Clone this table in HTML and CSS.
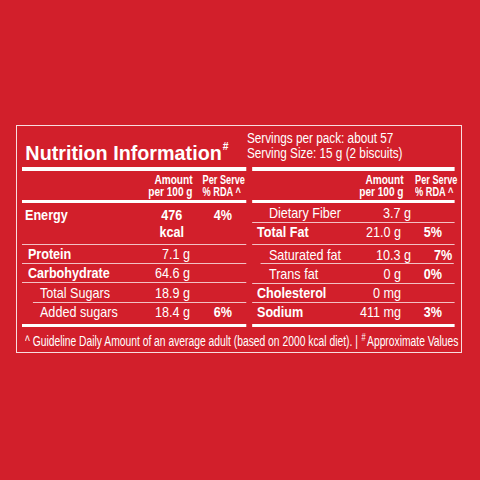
FILE: index.html
```html
<!DOCTYPE html>
<html>
<head>
<meta charset="utf-8">
<link rel="stylesheet" href="styles.css">
</head>
<body>
<div class="panel">
  <div class="inner">
    <div class="col left">
      <div class="head">
        <h1 class="title">Nutrition Information<sup class="hash">#</sup></h1>
      </div>
      <div class="rule"></div>
      <div class="colhead">
        <div></div>
        <div class="amt-h">Amount<br>per 100 g</div>
        <div class="rda-h"><span>Per Serve<br>% RDA ^</span></div>
      </div>
      <div class="rule r3"></div>
      <div class="row h42 line energy"><span class="lbl b e">Energy</span><span class="amt b"><span class="kcal">476<br>kcal</span></span><span class="rda">4%</span></div>
      <div class="row h19 line"><span class="lbl b">Protein</span><span class="amt">7.1 g</span><span class="rda"></span></div>
      <div class="row h19 line"><span class="lbl b">Carbohydrate</span><span class="amt">64.6 g</span><span class="rda"></span></div>
      <div class="row h20 line sub-line-l"><span class="lbl ind">Total Sugars</span><span class="amt">18.9 g</span><span class="rda"></span></div>
      <div class="row h21 top1"><span class="lbl ind">Added sugars</span><span class="amt">18.4 g</span><span class="rda">6%</span></div>
      <div class="rule r3"></div>
    </div>
    <div class="col right">
      <div class="head servings">
        <p>Servings per pack: about 57</p>
        <p>Serving Size: 15 g (2 biscuits)</p>
      </div>
      <div class="rule"></div>
      <div class="colhead">
        <div></div>
        <div class="amt-h">Amount<br>per 100 g</div>
        <div class="rda-h"><span>Per Serve<br>% RDA ^</span></div>
      </div>
      <div class="rule r3"></div>
      <div class="row h20 line"><span class="lbl ind">Dietary Fiber</span><span class="amt">3.7 g</span><span class="rda"></span></div>
      <div class="row h22 line top1"><span class="lbl b">Total Fat</span><span class="amt">21.0 g</span><span class="rda">5%</span></div>
      <div class="row h19 line sub-line-r"><span class="lbl ind">Saturated fat</span><span class="amt">10.3 g</span><span class="rda">7%</span></div>
      <div class="row h20 line"><span class="lbl ind">Trans fat</span><span class="amt">0 g</span><span class="rda">0%</span></div>
      <div class="row h19 line"><span class="lbl b">Cholesterol</span><span class="amt">0 mg</span><span class="rda"></span></div>
      <div class="row h21 top1"><span class="lbl b">Sodium</span><span class="amt">411 mg</span><span class="rda">3%</span></div>
      <div class="rule r3"></div>
    </div>
  </div>
  <div class="footer"><span class="ftext">^ Guideline Daily Amount of an average adult (based on 2000 kcal diet). | <sup class="fhash">#</sup>Approximate Values</span></div>
</div>
</body>
</html>
```
FILE: styles.css
```css
html, body {
  margin: 0;
  padding: 0;
  background: #d21f2b;
}
body {
  width: 480px;
  height: 480px;
  overflow: hidden;
  font-family: "Liberation Sans", Arial, sans-serif;
  color: #fff;
}
.panel {
  margin: 125px 0 0 16px;
  width: 433px;
  height: 226px;
  border: 1px solid rgba(255, 255, 255, 0.85);
  padding: 0 6px 0 5px;
  overflow: hidden;
}
/* condensed type: the whole table is laid out wide and squeezed horizontally */
.inner {
  width: 515.48px;
  display: flex;
  column-gap: 7.14px;
  transform: scaleX(0.84);
  transform-origin: 0 0;
}
.left { width: 266.67px; flex: none; }
.right { width: 241.67px; flex: none; }
.head {
  height: 41px;
  box-sizing: border-box;
  display: flex;
  flex-direction: column;
  justify-content: flex-end;
}
.title {
  margin: 0 0 2px 3.6px;
  font-size: 21px;
  font-weight: bold;
  line-height: 24px;
  white-space: nowrap;
  transform: scaleX(1.12);
  transform-origin: 0 0;
}
.hash {
  font-size: 11px;
  line-height: 11px;
  vertical-align: top;
  margin-left: 1px;
}
.servings {
  justify-content: flex-start;
  padding-top: 5px;
  margin-left: -6px;
}
.servings p {
  margin: 0;
  font-size: 14px;
  line-height: 15px;
  white-space: nowrap;
}
.rule {
  height: 4px;
  background: #fff;
}
.r3 { height: 3px; }
.colhead, .row {
  display: grid;
  grid-template-columns: 1fr 71.4px 54.8px;
  column-gap: 11.9px;
  align-items: center;
  white-space: nowrap;
}
.right .colhead, .right .row {
  grid-template-columns: 1fr 71.4px 52.4px;
}
.colhead { height: 29px; }
.amt-h {
  text-align: right;
  font-weight: bold;
  font-size: 12px;
  line-height: 12px;
  margin-right: -3px;
}
.rda-h {
  font-weight: bold;
  font-size: 12px;
  line-height: 12px;
  padding-left: 3.6px;
}
.right .rda-h { padding-left: 4.8px; }
.rda-h span {
  display: inline-block;
  transform: scaleX(0.91);
  transform-origin: 0 0;
}
.row {
  font-size: 15px;
  line-height: 16px;
  box-sizing: border-box;
}
.line { border-bottom: 1px solid rgba(255, 255, 255, 0.72); }
.sub-line-l, .sub-line-r {
  border-bottom: none;
  background-image: linear-gradient(rgba(255, 255, 255, 0.72), rgba(255, 255, 255, 0.72));
  background-repeat: no-repeat;
}
.sub-line-l { background-position: 13px 100%; background-size: calc(100% - 13px) 1px; }
.sub-line-r { background-position: 10.7px 100%; background-size: calc(100% - 10.7px) 1px; }
.h42 { height: 42px; }
.h22 { height: 22px; }
.h21 { height: 21px; }
.h20 { height: 20px; }
.h19 { height: 19px; }
.top1 { align-items: start; padding-top: 1px; }
.energy { align-items: start; padding-top: 3px; line-height: 17px; }
.lbl { padding-left: 7px; }
.lbl.e { padding-left: 3.6px; }
.right .lbl { padding-left: 6px; }
.lbl.ind { padding-left: 21.4px; }
.right .lbl.ind { padding-left: 20.2px; }
.b { font-weight: bold; }
.amt { text-align: right; }
.kcal {
  display: inline-block;
  text-align: center;
  margin-right: 7px;
}
.rda { text-align: center; font-weight: bold; }
.footer {
  height: 25px;
  padding: 5px 0 0 3px;
  box-sizing: border-box;
  white-space: nowrap;
}
.ftext {
  display: inline-block;
  font-size: 14px;
  line-height: 16px;
  transform: scaleX(0.736);
  transform-origin: 0 0;
}
.fhash {
  font-size: 10px;
  line-height: 10px;
  vertical-align: top;
  margin: 0 2px 0 1px;
}
```
